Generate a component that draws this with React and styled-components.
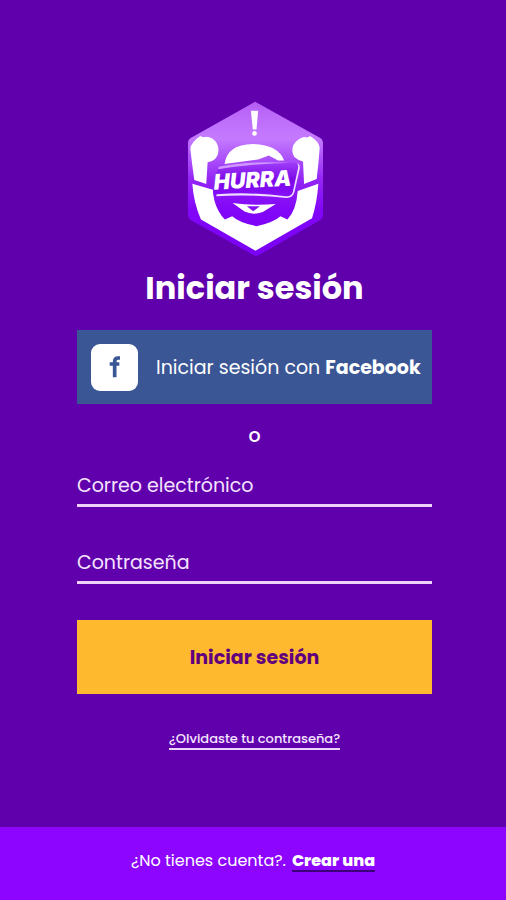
import React from "react";
import styled, { createGlobalStyle } from "styled-components";

const App = () => {
  return (
    <Page>
      <GlobalStyle />
      <Main>
        <Logo />
        <Title>Iniciar sesión</Title>

        <FacebookButton type="button">
          <FacebookIcon>
            <svg width="12" height="22" viewBox="88 65 36 66" aria-hidden="true">
              <path
                d="M121 71 H115 Q105 71 105 82 V129 M90 89 H119"
                fill="none"
                stroke="currentColor"
                strokeWidth="11"
              />
            </svg>
          </FacebookIcon>
          <span>
            Iniciar sesión con <strong>Facebook</strong>
          </span>
        </FacebookButton>

        <Divider>o</Divider>

        <Form onSubmit={(e) => e.preventDefault()}>
          <Field
            type="email"
            placeholder="Correo electrónico"
            aria-label="Correo electrónico"
          />
          <Field
            type="password"
            placeholder="Contraseña"
            aria-label="Contraseña"
          />
          <SubmitButton type="submit">Iniciar sesión</SubmitButton>
        </Form>

        <ForgotLink href="#recuperar">¿Olvidaste tu contraseña?</ForgotLink>
      </Main>

      <Footer>
        <span>¿No tienes cuenta?.</span>
        <a href="#crear">Crear una</a>
      </Footer>
    </Page>
  );
};

const Logo = () => (
  <LogoSvg viewBox="45 35 415 468" role="img" aria-label="Hurra">
    <defs>
      <linearGradient id="shield" x1="0" y1="0" x2="0" y2="1">
        <stop offset="0" stopColor="#b45cf5" />
        <stop offset="0.1" stopColor="#bd6cfa" />
        <stop offset="0.24" stopColor="#c47aff" />
        <stop offset="0.5" stopColor="#9426f5" />
        <stop offset="0.7" stopColor="#8206f8" />
        <stop offset="1" stopColor="#7a00f5" />
      </linearGradient>
      <linearGradient id="banner" x1="0" y1="0" x2="0" y2="1">
        <stop offset="0" stopColor="#a03ff8" />
        <stop offset="0.5" stopColor="#7c08ea" />
        <stop offset="1" stopColor="#8510fa" />
      </linearGradient>
    </defs>
    <path
      d="M253 37 L449 146 Q457 151 457 160 V378 Q457 387 449 392 L266 497 Q256 503 246 497 L59 392 Q51 387 51 378 V160 Q51 151 59 146 Z"
      fill="url(#shield)"
    />
    {/* exclamation mark */}
    <path d="M240 64 H262 L257 120 H246 Z" fill="#fff" />
    <circle cx="251" cy="132" r="7" fill="#fff" />
    {/* fists */}
    <path
      d="M88 140 Q95 145 105 142 Q126 143 138 162 Q148 183 137 203 Q129 216 110 219 L106 284 L70 272 Q63 225 58 178 Q59 160 88 140 Z"
      fill="#fff"
    />
    <path
      d="M418 140 Q412 146 401 143 Q380 147 368 167 Q360 186 371 203 Q381 213 397 216 L400 284 L438 269 Q444 220 447 174 Q445 157 418 140 Z"
      fill="#fff"
    />
    {/* arms and chest */}
    <path
      d="M64 283 L126 301 Q127 336 143 365 Q151 380 162 391 L184 381 Q204 400 257 411 Q308 400 329 381 L350 391 Q377 362 381 305 L443 283 Q439 340 424 387 L254 485 L90 391 Q68 340 64 283 Z"
      fill="#fff"
    />
    {/* head */}
    <path
      d="M161 224 Q168 166 246 164 Q321 166 340 213 L322 213 L294 198 L262 210 Z"
      fill="#fff"
    />
    {/* banner */}
    <path
      d="M141 231 Q250 212 378 220 Q385 221 384 233 L365 315 Q360 326 346 325 Q236 311 135 322 Q126 321 127 306 Z"
      fill="url(#banner)"
    />
    <path
      d="M142 232 Q230 214 360 220 Q250 222 142 240 Z"
      fill="#cf96ff"
    />
    <path
      d="M377 222 Q384 223 382 236 L366 309 Q361 323 345 321 Q240 307 137 315 L136 321 Q245 315 348 326 Q366 326 371 309 L387 238 Q389 223 377 222 Z"
      fill="#f0dcff"
    />
    <text
      x="246"
      y="295"
      transform="rotate(-3 246 295)"
      textAnchor="middle"
      fontFamily="Inter, sans-serif"
      fontSize="65"
      fontWeight="900"
      fontStyle="italic"
      fill="#fff"
    >
      HURRA
    </text>
    {/* mouth */}
    <path d="M185 341 Q250 350 315 344 L276 368 Q247 379 221 367 Z" fill="#fff" />
    <path d="M228 351 L267 351 L247 366 Z" fill="#8610f5" />
  </LogoSvg>
);

export default App;

const GlobalStyle = createGlobalStyle`
  * {
    box-sizing: border-box;
  }

  body {
    margin: 0;
    background: #6000ad;
    font-family: Poppins, Inter, sans-serif;
  }
`;

const Page = styled.div`
  display: flex;
  flex-direction: column;
  min-height: 100vh;
  color: #fff;
`;

const Main = styled.main`
  display: flex;
  flex: 1;
  flex-direction: column;
  align-items: center;
  padding: 101px 74px 32px 77px;
`;

const LogoSvg = styled.svg`
  width: 138px;
  height: 156px;
`;

const Title = styled.h1`
  margin: 9px 0 20px;
  font-size: 32px;
  line-height: 44px;
  font-weight: 700;
`;

/**buttons */
const Button = styled.button`
  display: flex;
  align-items: center;
  width: 100%;
  min-height: 74px;
  border: none;
  font-family: inherit;
  font-size: 19px;
  cursor: pointer;
`;

const FacebookButton = styled(Button)`
  gap: 18px;
  padding: 0 8px 0 14px;
  background: #3b5695;
  color: #fff;
  text-align: left;

  strong {
    font-weight: 700;
  }
`;

const FacebookIcon = styled.span`
  display: flex;
  flex-shrink: 0;
  align-items: center;
  justify-content: center;
  width: 47px;
  height: 47px;
  border-radius: 9px;
  background: #fff;
  color: #3b5695;
`;

const SubmitButton = styled(Button)`
  justify-content: center;
  background: #ffb92e;
  color: #60007f;
  font-weight: 700;
`;

const Divider = styled.p`
  margin: 20px 0 18px;
  font-size: 19px;
  line-height: 24px;
  font-weight: 500;
`;

/**email and password */
const Form = styled.form`
  display: flex;
  flex-direction: column;
  gap: 36px;
  width: 100%;
`;

const Field = styled.input`
  width: 100%;
  height: 41px;
  padding: 0;
  border: none;
  border-bottom: 3px solid #eed3ff;
  border-radius: 0;
  outline: none;
  background: transparent;
  color: #fff;
  font-family: inherit;
  font-size: 19px;

  &::placeholder {
    color: #f5e4ff;
    opacity: 1;
  }
`;

const ForgotLink = styled.a`
  margin-top: 36px;
  border-bottom: 2px solid #eed3ff;
  color: #f5e4ff;
  font-size: 13px;
  line-height: 18px;
  font-weight: 500;
  text-decoration: none;
`;

const Footer = styled.footer`
  display: flex;
  align-items: baseline;
  justify-content: center;
  gap: 6px;
  padding: 25px 0 28px;
  background: #8d05ff;
  font-size: 16px;
  line-height: 18px;

  a {
    border-bottom: 2px solid #3c0078;
    color: #fff;
    font-weight: 800;
    text-decoration: none;
  }
`;
